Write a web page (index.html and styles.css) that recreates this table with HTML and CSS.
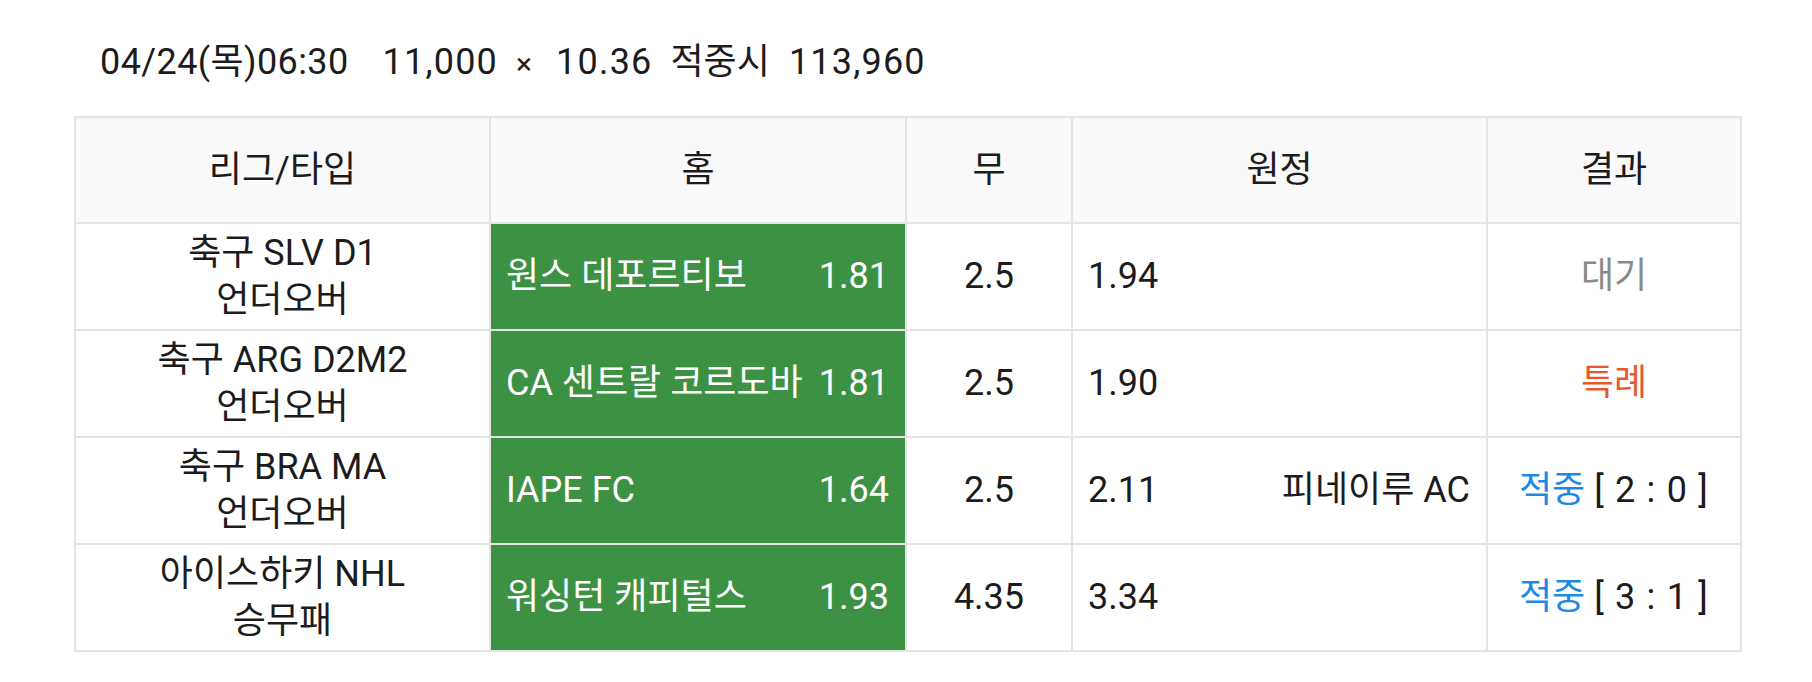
FILE: index.html
```html
<!DOCTYPE html>
<html lang="ko">
<head>
<meta charset="utf-8">
<title>베팅 내역</title>
<link rel="stylesheet" href="styles.css">
</head>
<body>
<div class="wrap">
  <div class="summary">
    <span class="s-date">04/24(목)06:30</span>
    <span class="s-amount num">11,000</span>
    <span class="s-times">×</span>
    <span class="s-odds num">10.36</span>
    <span class="s-label">적중시</span>
    <span class="s-win num">113,960</span>
  </div>
  <table class="bets">
    <colgroup>
      <col class="c-league">
      <col class="c-home">
      <col class="c-draw">
      <col class="c-away">
      <col class="c-result">
    </colgroup>
    <thead>
      <tr>
        <th>리그/타입</th>
        <th>홈</th>
        <th>무</th>
        <th>원정</th>
        <th>결과</th>
      </tr>
    </thead>
    <tbody>
      <tr>
        <td class="league">축구 SLV D1<br>언더오버</td>
        <td class="team picked"><div class="team-in"><span>원스 데포르티보</span><span>1.81</span></div></td>
        <td class="draw">2.5</td>
        <td class="team"><div class="team-in"><span>1.94</span><span></span></div></td>
        <td class="result"><span class="wait">대기</span></td>
      </tr>
      <tr>
        <td class="league">축구 ARG D2M2<br>언더오버</td>
        <td class="team picked"><div class="team-in"><span>CA 센트랄 코르도바</span><span>1.81</span></div></td>
        <td class="draw">2.5</td>
        <td class="team"><div class="team-in"><span>1.90</span><span></span></div></td>
        <td class="result"><span class="special">특례</span></td>
      </tr>
      <tr>
        <td class="league">축구 BRA MA<br>언더오버</td>
        <td class="team picked"><div class="team-in"><span>IAPE FC</span><span>1.64</span></div></td>
        <td class="draw">2.5</td>
        <td class="team"><div class="team-in"><span>2.11</span><span>피네이루 AC</span></div></td>
        <td class="result"><span class="hit">적중</span> <span class="score">[ 2 : 0 ]</span></td>
      </tr>
      <tr>
        <td class="league">아이스하키 NHL<br>승무패</td>
        <td class="team picked"><div class="team-in"><span>워싱턴 캐피털스</span><span>1.93</span></div></td>
        <td class="draw">4.35</td>
        <td class="team"><div class="team-in"><span>3.34</span><span></span></div></td>
        <td class="result"><span class="hit">적중</span> <span class="score">[ 3 : 1 ]</span></td>
      </tr>
    </tbody>
  </table>
</div>
</body>
</html>
```
FILE: styles.css
```css
html, body {
  margin: 0;
  padding: 0;
  background: #ffffff;
}

body {
  font-family: Roboto, "Noto Sans CJK KR", sans-serif;
  color: #1c1c1c;
}

.wrap {
  padding: 41px 0 0 74px;
}

.summary {
  display: flex;
  align-items: baseline;
  padding-left: 26px;
  font-size: 36px;
  line-height: 42px;
  height: 42px;
  color: #1c1c1c;
}

.s-date { letter-spacing: 0.4px; }
.summary .num { letter-spacing: 1.2px; }

.s-amount { margin-left: 34px; }
.s-times { margin-left: 18px; font-size: 30px; }
.s-odds { margin-left: 24px; }
.s-label { margin-left: 18px; }
.s-win { margin-left: 19px; }

.bets {
  margin-top: 33px;
  border-collapse: collapse;
  table-layout: fixed;
  width: 1666px;
  font-size: 36px;
  line-height: 47px;
}

.c-league { width: 415px; }
.c-home { width: 416px; }
.c-draw { width: 166px; }
.c-away { width: 415px; }
.c-result { width: 254px; }

.bets th,
.bets td {
  border: 2px solid #e4e4e4;
  text-align: center;
  vertical-align: middle;
  padding: 0;
  font-weight: 400;
}

.bets thead tr {
  height: 106px;
}

.bets th {
  background: #f9f9f9;
}

.bets tbody tr {
  height: 107px;
}

.bets td.picked {
  background: #3d9142;
  color: #ffffff;
}

.team-in {
  display: flex;
  justify-content: space-between;
  align-items: center;
  padding: 0 16px 0 15px;
  text-align: left;
}

.result .wait { color: #8a8a8a; }
.result .special { color: #e8582c; }
.result .hit { color: #1e88e5; }
.result .score { letter-spacing: 1.2px; }
```
